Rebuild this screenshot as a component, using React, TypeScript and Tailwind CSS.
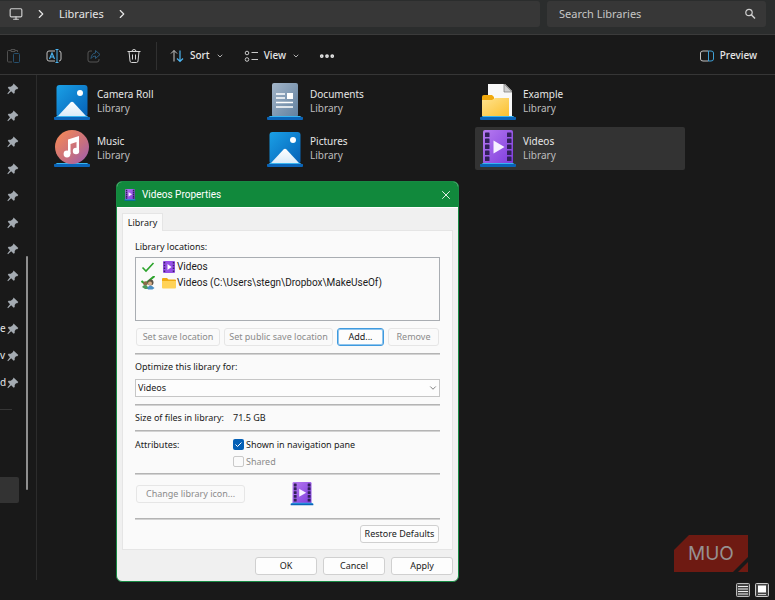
import { ChevronDown, ChevronRight, Ellipsis, Monitor, Search, X } from "lucide-react";
import type { ReactNode } from "react";

const StandBase = () => (
  <>
    <path d="M3 33h30l3 2H0z" fill="#38b5f0" />
    <rect x="0" y="34" width="36" height="3" rx="1" fill="#0a64b8" />
  </>
);

const PicturesIcon = () => (
  <svg viewBox="0 0 36 38" className="h-[38px] w-9">
    <defs>
      <linearGradient id="pic" x1="0" y1="0" x2="1" y2="1">
        <stop offset="0" stopColor="#1aa0e6" />
        <stop offset="1" stopColor="#0560b6" />
      </linearGradient>
      <linearGradient id="hill" x1="0" y1="0" x2="0" y2="1">
        <stop offset="0" stopColor="#ffffff" />
        <stop offset="1" stopColor="#d9ebf8" />
      </linearGradient>
    </defs>
    <rect x="2.5" y="2" width="31" height="32" rx="3" fill="url(#pic)" />
    <path d="M4 33 16.5 19.5q1.5-1.5 3 0L32 33z" fill="url(#hill)" />
    <circle cx="26" cy="10" r="3" fill="#fff" />
    <StandBase />
  </svg>
);

const MusicIcon = () => (
  <svg viewBox="0 0 36 38" className="h-[38px] w-9">
    <defs>
      <linearGradient id="mus" x1="0" y1="0" x2="1" y2="1">
        <stop offset="0.1" stopColor="#f2875a" />
        <stop offset="0.6" stopColor="#c66f80" />
        <stop offset="1" stopColor="#9a5bb5" />
      </linearGradient>
    </defs>
    <StandBase />
    <circle cx="18" cy="17" r="17" fill="url(#mus)" />
    <path d="M14 9.5 25 6v15h-2.5v-9l-6 2v10H14z" fill="#fff" />
    <circle cx="13" cy="24" r="3.4" fill="#fff" />
    <circle cx="22" cy="21" r="3.2" fill="#fff" />
  </svg>
);

const DocumentsIcon = () => (
  <svg viewBox="0 0 36 38" className="h-[38px] w-9">
    <defs>
      <linearGradient id="doc" x1="0" y1="0" x2="1" y2="1">
        <stop offset="0" stopColor="#a3b5c8" />
        <stop offset="1" stopColor="#61809f" />
      </linearGradient>
    </defs>
    <rect x="5" y="0" width="26" height="34" rx="2" fill="url(#doc)" />
    <path d="M9 11h9M9 15h9M9 19.5h17M9 24h17" stroke="#fff" strokeWidth="1.7" />
    <rect x="20" y="10" width="6" height="6" fill="#fff" />
    <StandBase />
  </svg>
);

const ExampleIcon = () => (
  <svg viewBox="0 0 36 38" className="h-[38px] w-9">
    <defs>
      <linearGradient id="fold" x1="0" y1="0" x2="1" y2="1">
        <stop offset="0" stopColor="#ffe38e" />
        <stop offset="1" stopColor="#fbc02f" />
      </linearGradient>
    </defs>
    <path d="M8 1h17l7 7v25H8z" fill="#f8f8f8" />
    <path d="M24 1v8h8z" fill="#cfcfcf" stroke="#777" strokeWidth="0.7" />
    <path d="M2 14q0-2 2-2h8l2 2v4H2z" fill="#f0a90e" />
    <path d="M2 17h10l3-2h14v18H2z" fill="url(#fold)" />
    <StandBase />
  </svg>
);

const VideosIcon = ({ className }: { className: string }) => (
  <svg viewBox="0 0 36 38" className={className}>
    <defs>
      <linearGradient id="vid" x1="0" y1="0" x2="1" y2="1">
        <stop offset="0" stopColor="#b67af0" />
        <stop offset="1" stopColor="#7d3bdc" />
      </linearGradient>
    </defs>
    <rect x="3" y="0" width="30" height="34" rx="2" fill="url(#vid)" />
    {[2.5, 8.5, 14.5, 20.5, 26.5].map((y) => (
      <g key={y} fill="#32205a">
        <rect x="5" y={y} width="4.5" height="4.5" rx="0.6" />
        <rect x="27" y={y} width="4.5" height="4.5" rx="0.6" />
      </g>
    ))}
    <path d="M13.5 10.5v13L24.5 17z" fill="#f6f0ff" />
    <StandBase />
  </svg>
);

const FilmIcon = () => (
  <svg viewBox="0 0 12 12" className="h-3 w-3">
    <rect width="12" height="12" rx="1" fill="#9650e6" />
    <path d="M1.5 1v10M10.5 1v10" stroke="#3b2168" strokeWidth="1.5" strokeDasharray="1.5 1.3" />
    <path d="M4.5 3v6l4-3z" fill="#fff" />
  </svg>
);

const FolderIcon = () => (
  <svg viewBox="0 0 14 12" className="h-3 w-3.5">
    <path d="M0 2q0-1 1-1h4l1.5 1.5H13q1 0 1 1V5H0z" fill="#f0ab12" />
    <path d="M0 4h14v6.5q0 1-1 1H1q-1 0-1-1z" fill="#ffd257" />
  </svg>
);

const CheckMark = () => (
  <svg viewBox="0 0 14 12" className="h-3 w-3.5">
    <path d="M1.5 6.5 5 10l7.5-8" fill="none" stroke="#2ba32b" strokeWidth="1.6" />
  </svg>
);

const SharedMark = () => (
  <svg viewBox="0 0 14 14" className="h-3.5 w-3.5">
    <path d="M.5 5 4 8l9.500-8" fill="none" stroke="#2ba32b" strokeWidth="2" />
    <circle cx="4.5" cy="7.5" r="2.3" fill="#8a6a4a" />
    <circle cx="9.5" cy="6.5" r="3" fill="#5d5346" />
    <circle cx="9" cy="7.5" r="2" fill="#d9ae88" />
    <path d="M1 11q3-4 6 0v2H4z" fill="#4c9a5a" />
    <path d="M6 12q3-5 7.5 0l-2 1.5H7z" fill="#4a8fc4" />
  </svg>
);

const Pin = () => (
  <svg viewBox="0 0 13 13" className="relative h-[13px] w-[13px] shrink-0">
    <path d="M7.5 1.5 12.300 6l-1 1.200H10L8.700 9v2l-1 .8L5.200 9.300 2 12.200l-.6-.6L4 8.200 1.800 5.800l.8-1h2.200L7 3z" fill="#a4abb2" />
  </svg>
);

const PasteIcon = () => (
  <svg viewBox="0 0 16 16" className="h-4 w-4" fill="none">
    <path d="M5 2.5H2.5q-1 0-1 1V13q0 1 1 1H6M9 2.500h2.500V4M5 1.500h4v2H5z" stroke="#505050" />
    <rect x="7.5" y="5.5" width="6" height="9" rx="1" stroke="#27506e" />
  </svg>
);

const RenameIcon = () => (
  <svg viewBox="0 0 16 16" className="h-4 w-4" fill="none">
    <path d="M9 3H3Q1 3 1 5v6q0 2 2 2h6M13 3q2 0 2 2v6q0 2-2 2" stroke="#c0c0c0" />
    <path d="M11 1.5v13M9.5 1.500h3M9.500 14.500h3" stroke="#4cb4f0" />
    <path d="M3.5 11 6 5l2.500 6M4.500 9h3" stroke="#4cb4f0" strokeWidth="1.2" />
  </svg>
);

const ShareIcon = () => (
  <svg viewBox="0 0 16 16" className="h-4 w-4" fill="none">
    <path d="M6 3H4Q2 3 2 5v7q0 2 2 2h7q2 0 2-2v-1" stroke="#555" />
    <path d="M9.5 2.5 14 6.500l-4.500 4V8Q6.500 8 5 10.500q.5-5 4.500-5.500z" stroke="#2c597a" />
  </svg>
);

const DeleteIcon = () => (
  <svg viewBox="0 0 16 16" className="h-4 w-4" fill="none" stroke="#d6d6d6">
    <path d="M1.5 3.500h13M6 3.500q0-2 2-2t2 2M3 3.500l1 9.500q.2 1.500 1.500 1.500h5q1.300 0 1.500-1.500l1-9.500M6.500 6.500v5M9.500 6.500v5" />
  </svg>
);

const SortIcon = () => (
  <svg viewBox="0 0 14 14" className="h-3.5 w-3.5" fill="none">
    <path d="M4 12.5v-11M1 4.500l3-3 3 3" stroke="#c8c8c8" />
    <path d="M10 1.5v11M7 9.500l3 3 3-3" stroke="#4cb4f0" strokeWidth="1.2" />
  </svg>
);

const ViewIcon = () => (
  <svg viewBox="0 0 14 14" className="h-3.5 w-3.5" fill="none" stroke="#c8c8c8">
    <circle cx="3" cy="4" r="1.8" />
    <circle cx="3" cy="10.5" r="1.8" />
    <path d="M7.5 3.500H14M7.500 10.500H14" />
  </svg>
);

const PreviewIcon = () => (
  <svg viewBox="0 0 14 12" className="h-3 w-3.5" fill="none">
    <path d="M8.5 1H3Q.5 1 .5 3v6q0 2 2.500 2h5.500" stroke="#c0c0c0" />
    <path d="M8.5 1H11q2.500 0 2.500 2v6q0 2-2.500 2H8.500z" stroke="#3e9fd6" />
  </svg>
);

const libraries = [
  { name: "Camera Roll", icon: <PicturesIcon /> },
  { name: "Documents", icon: <DocumentsIcon /> },
  { name: "Example", icon: <ExampleIcon /> },
  { name: "Music", icon: <MusicIcon /> },
  { name: "Pictures", icon: <PicturesIcon /> },
  { name: "Videos", icon: <VideosIcon className="h-[38px] w-9" />, selected: true },
];

const pinned = ["", "", "", "", "", "", "", "", "", "e", "v", "d"];

const Rule = () => <hr className="h-0.5 border-t border-b border-t-[#b4b4b4] border-b-[#d2d2d2]" />;

type DialogButtonProps = {
  children: ReactNode;
  className?: string;
  disabled?: boolean;
  focused?: boolean;
};

const DialogButton = ({ children, className = "", disabled, focused }: DialogButtonProps) => (
  <button
    type="button"
    disabled={disabled}
    className={`h-[18px] rounded-[3px] border whitespace-nowrap leading-4 ${
      disabled
        ? "border-[#e6e6e6] text-[#8b8b8b]"
        : focused
          ? "border-[#3f9ade] bg-[#fdfdfd] ring-1 ring-[#8fc5ee] ring-inset"
          : "border-[#d0d0d0] bg-[#fdfdfd]"
    } ${className}`}
  >
    {children}
  </button>
);

const PropertiesDialog = () => (
  <section
    role="dialog"
    aria-labelledby="dialog-title"
    className="absolute top-[181px] left-[116px] w-[343px] overflow-hidden rounded-md border border-[#178a43] bg-[#f0f0f0] font-['Noto_Sans',sans-serif] text-[9px] text-[#1b1b1b]"
  >
    <header className="flex h-[25px] items-center bg-[#11893c] pr-[5px] pl-[7px] text-white">
      <VideosIcon className="h-3 w-3" />
      <h2 id="dialog-title" className="ml-1.5 flex-1 font-[Roboto,sans-serif] text-[10px]">
        Videos Properties
      </h2>
      <button type="button" aria-label="Close">
        <X className="h-3.5 w-3.5" strokeWidth={1.5} />
      </button>
    </header>

    <div className="border-t border-white px-[5px] pt-[5px] pb-1.5">
      <div role="tablist" className="flex">
        <button
          type="button"
          role="tab"
          aria-selected="true"
          className="relative -mb-px h-[18px] w-[41px] border border-b-0 border-[#e5e5e5] bg-[#fafafa] leading-4"
        >
          Library
        </button>
      </div>

      <div className="border border-[#e5e5e5] bg-[#fafafa] px-3 pt-1.5 pb-1.5">
        <p className="leading-5">Library locations:</p>
        <ul className="h-16 border border-[#a9adb2] pt-px font-[Roboto,sans-serif] text-[10px] leading-4">
          <li className="flex h-4 items-center pl-[5px]">
            <CheckMark />
            <span className="mr-0.5 ml-2">
              <FilmIcon />
            </span>
            Videos
          </li>
          <li className="flex h-4 items-center pl-[5px]">
            <SharedMark />
            <span className="mr-px ml-[7px]">
              <FolderIcon />
            </span>
            Videos (C:\Users\stegn\Dropbox\MakeUseOf)
          </li>
        </ul>

        <div className="my-[7px] flex gap-1 px-px">
          <DialogButton disabled className="w-[84px]">Set save location</DialogButton>
          <DialogButton disabled className="w-[109px]">Set public save location</DialogButton>
          <DialogButton focused className="w-[47px]">Add...</DialogButton>
          <DialogButton disabled className="w-[51px]">Remove</DialogButton>
        </div>
        <Rule />

        <label htmlFor="optimize" className="block leading-6">
          Optimize this library for:
        </label>
        <div className="relative mb-[7px]">
          <select
            id="optimize"
            className="block h-[18px] w-full appearance-none border border-[#c6c6c6] bg-[#fdfdfd] px-0.5 leading-4"
          >
            <option>Videos</option>
          </select>
          <ChevronDown className="pointer-events-none absolute top-1 right-0.5 h-2.5 w-2.5 text-[#666]" />
        </div>
        <Rule />

        <p className="flex leading-6">
          <span className="w-[98px] whitespace-nowrap">Size of files in library:</span>
          <span>71.5 GB</span>
        </p>
        <Rule />

        <div className="flex pt-1 pb-[3px] leading-[17px]">
          <span className="w-[98px]">Attributes:</span>
          <div>
            <label className="flex items-center gap-0.5">
              <span className="relative flex">
                <input type="checkbox" defaultChecked className="h-[11px] w-[11px] appearance-none rounded-[2px] bg-[#0560b6]" />
                <svg viewBox="0 0 11 11" className="pointer-events-none absolute inset-0" fill="none" stroke="#fff">
                  <path d="M2.5 5.500 4.500 7.500 8.500 3.500" />
                </svg>
              </span>
              Shown in navigation pane
            </label>
            <label className="flex items-center gap-0.5 text-[#8b8b8b]">
              <input type="checkbox" disabled className="h-[11px] w-[11px] appearance-none rounded-[2px] border border-[#c9c9c9]" />
              Shared
            </label>
          </div>
        </div>
        <Rule />

        <div className="flex items-center gap-[45px] px-px pt-[7px] pb-3">
          <DialogButton disabled className="w-[109px]">Change library icon...</DialogButton>
          <VideosIcon className="h-6 w-6" />
        </div>
        <Rule />

        <div className="mt-[5px] flex justify-end px-px">
          <DialogButton className="w-[79px]">Restore Defaults</DialogButton>
        </div>
      </div>

      <div className="mt-[7px] flex justify-end gap-1.5">
        <DialogButton className="w-[62px]">OK</DialogButton>
        <DialogButton className="w-[62px]">Cancel</DialogButton>
        <DialogButton className="w-[62px]">Apply</DialogButton>
      </div>
    </div>
  </section>
);

export default function App() {
  return (
    <main className="relative flex min-h-screen flex-col overflow-hidden bg-[#191919] font-['Noto_Sans',sans-serif] text-[10px] text-[#e6e6e6]">
      <header className="flex h-[35px] gap-[7px] border-b border-[#3b3b3b] bg-[#2b2d2d] pt-px pr-[9px] pb-[7px]">
        <nav aria-label="Address" className="flex flex-1 items-center rounded-r-[3px] bg-[#373737] pl-[9px] text-[11px]">
          <Monitor className="h-3.5 w-3.5 text-[#d0d0d0]" />
          <ChevronRight className="ml-[11px] h-3.5 w-3.5" />
          <a href="#libraries" className="ml-[11px]">Libraries</a>
          <ChevronRight className="ml-[11px] h-3.5 w-3.5" />
        </nav>
        <label className="flex w-[219px] items-center rounded-[3px] bg-[#373737] pr-2.5 pl-3">
          <input
            type="search"
            aria-label="Search Libraries"
            placeholder="Search Libraries"
            className="min-w-0 flex-1 text-[11px] outline-none placeholder:text-[#c6c6c6]"
          />
          <svg viewBox="0 0 12 12" className="h-3 w-3" fill="none" stroke="#d0d0d0">
            <circle cx="5" cy="4.5" r="3.2" strokeWidth="1.2" />
            <path d="M7.3 6.8 11 10.500" strokeWidth="1.5" />
          </svg>
        </label>
      </header>

      <div role="toolbar" className="flex h-10 items-center border-b border-[#363636] pt-0.5 pr-[18px] pl-1.5">
        <div className="flex gap-6">
          <button type="button" disabled aria-label="Paste"><PasteIcon /></button>
          <button type="button" aria-label="Rename"><RenameIcon /></button>
          <button type="button" disabled aria-label="Share"><ShareIcon /></button>
          <button type="button" aria-label="Delete"><DeleteIcon /></button>
        </div>
        <div className="ml-3.5 h-7 w-px bg-[#303030]" />
        <button type="button" className="ml-[13px] flex items-center gap-1.5 font-medium">
          <SortIcon />
          Sort
          <ChevronDown className="h-2 w-2 text-[#b0b0b0]" strokeWidth={3} />
        </button>
        <button type="button" className="ml-5 flex items-center gap-1.5 font-medium">
          <ViewIcon />
          View
          <ChevronDown className="h-2 w-2 text-[#b0b0b0]" strokeWidth={3} />
        </button>
        <button type="button" aria-label="See more" className="ml-[18px]">
          <Ellipsis className="h-[18px] w-[18px]" strokeWidth={3} />
        </button>
        <button type="button" className="ml-auto flex items-center gap-1.5 font-medium">
          <PreviewIcon />
          Preview
        </button>
      </div>

      <div className="mb-5 flex flex-1">
        <aside className="relative w-[37px] shrink-0 border-r border-[#2c2c2c] pt-[7px]">
          <ul className="flex h-[307px] flex-col justify-between">
            {pinned.map((text, index) => (
              <li key={index} className="flex h-[13px] items-center">
                <span className="w-1.5">{text}</span>
                <Pin />
              </li>
            ))}
          </ul>
          <div className="mt-5 h-px w-3 bg-[#363636]" />
          <div className="mt-[67px] h-[26px] w-[19px] rounded-r-[2px] bg-[#333]" />
          <div className="absolute top-[181px] right-2 h-[234px] w-0.5 rounded-full bg-[#8f8f8f]" />
        </aside>

        <ul className="grid flex-1 grid-cols-[repeat(auto-fill,210px)] content-start gap-x-[3px] gap-y-1 pt-[5px] pl-3">
          {libraries.map((library) => (
            <li
              key={library.name}
              className={`flex h-[43px] items-center gap-[7px] rounded-[2px] pl-[5px] ${library.selected ? "bg-[#333]" : ""}`}
            >
              {library.icon}
              <div className="pb-0.5 leading-[14px]">
                <p>{library.name}</p>
                <p className="text-[#bdbdbd]">Library</p>
              </div>
            </li>
          ))}
        </ul>
      </div>

      <PropertiesDialog />

      <svg viewBox="0 0 74 37" className="absolute right-[27px] bottom-7 h-[37px] w-[74px]">
        <path d="M15 0h59v22L59 37H0V15z" fill="#6e1a12" />
        <path d="M74 27v10H64z" fill="#6e1a12" />
        <text x="14" y="25" fill="#969191" fontFamily="Inter, sans-serif" fontSize="19" fontWeight="400">
          MUO
        </text>
      </svg>

      <div className="absolute right-1.5 bottom-[3px] flex gap-[5px]">
        <button type="button" aria-label="Details view">
          <svg viewBox="0 0 14 14" className="h-3.5 w-3.5">
            <rect x="0.5" y="0.5" width="13" height="13" rx="1" fill="#444" stroke="#bbb" />
            <path d="M2 3.5h10M2 6h10M2 8.500h10M2 11h10" stroke="#eee" />
          </svg>
        </button>
        <button type="button" aria-label="Large icons view">
          <svg viewBox="0 0 14 14" className="h-3.5 w-3.5">
            <rect x="0.5" y="0.5" width="13" height="13" rx="1" fill="#444" stroke="#ccc" />
            <rect x="3" y="2.5" width="8" height="7" fill="#fff" />
            <path d="M3 11.5h8" stroke="#ccc" />
          </svg>
        </button>
      </div>
    </main>
  );
}
